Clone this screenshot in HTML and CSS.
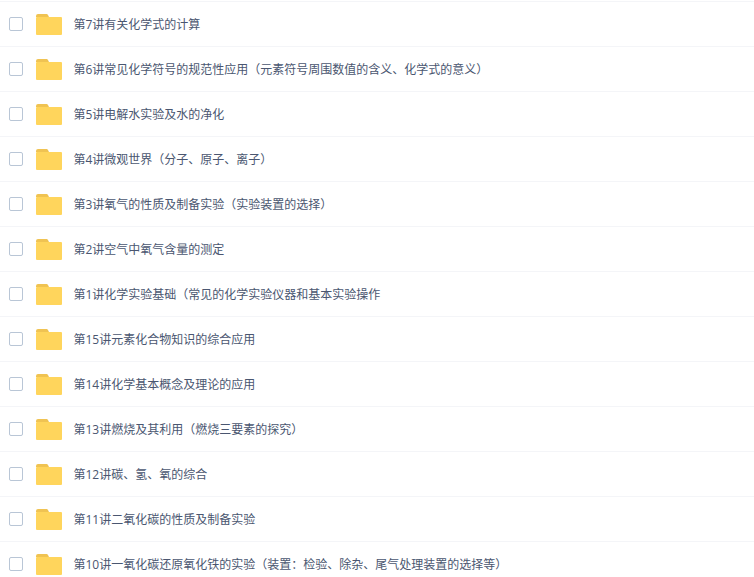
FILE: index.html
```html
<!DOCTYPE html>
<html lang="zh">
<head>
<meta charset="utf-8">
<title>文件列表</title>
<link rel="stylesheet" href="styles.css">
</head>
<body>
<ul class="list">
<li class="row"><span class="check"></span><svg class="folder" viewBox="0 0 26 21"><path class="tab" d="M0 2a2 2 0 0 1 2-2h8a2 2 0 0 1 2 1l1 2H0z"/><path class="body" d="M0 4a1 1 0 0 1 1-1h24a1 1 0 0 1 1 1v16a1 1 0 0 1-1 1H1a1 1 0 0 1-1-1z"/></svg><span class="name">第7讲有关化学式的计算</span></li>
<li class="row"><span class="check"></span><svg class="folder" viewBox="0 0 26 21"><path class="tab" d="M0 2a2 2 0 0 1 2-2h8a2 2 0 0 1 2 1l1 2H0z"/><path class="body" d="M0 4a1 1 0 0 1 1-1h24a1 1 0 0 1 1 1v16a1 1 0 0 1-1 1H1a1 1 0 0 1-1-1z"/></svg><span class="name">第6讲常见化学符号的规范性应用（元素符号周围数值的含义、化学式的意义）</span></li>
<li class="row"><span class="check"></span><svg class="folder" viewBox="0 0 26 21"><path class="tab" d="M0 2a2 2 0 0 1 2-2h8a2 2 0 0 1 2 1l1 2H0z"/><path class="body" d="M0 4a1 1 0 0 1 1-1h24a1 1 0 0 1 1 1v16a1 1 0 0 1-1 1H1a1 1 0 0 1-1-1z"/></svg><span class="name">第5讲电解水实验及水的净化</span></li>
<li class="row"><span class="check"></span><svg class="folder" viewBox="0 0 26 21"><path class="tab" d="M0 2a2 2 0 0 1 2-2h8a2 2 0 0 1 2 1l1 2H0z"/><path class="body" d="M0 4a1 1 0 0 1 1-1h24a1 1 0 0 1 1 1v16a1 1 0 0 1-1 1H1a1 1 0 0 1-1-1z"/></svg><span class="name">第4讲微观世界（分子、原子、离子）</span></li>
<li class="row"><span class="check"></span><svg class="folder" viewBox="0 0 26 21"><path class="tab" d="M0 2a2 2 0 0 1 2-2h8a2 2 0 0 1 2 1l1 2H0z"/><path class="body" d="M0 4a1 1 0 0 1 1-1h24a1 1 0 0 1 1 1v16a1 1 0 0 1-1 1H1a1 1 0 0 1-1-1z"/></svg><span class="name">第3讲氧气的性质及制备实验（实验装置的选择）</span></li>
<li class="row"><span class="check"></span><svg class="folder" viewBox="0 0 26 21"><path class="tab" d="M0 2a2 2 0 0 1 2-2h8a2 2 0 0 1 2 1l1 2H0z"/><path class="body" d="M0 4a1 1 0 0 1 1-1h24a1 1 0 0 1 1 1v16a1 1 0 0 1-1 1H1a1 1 0 0 1-1-1z"/></svg><span class="name">第2讲空气中氧气含量的测定</span></li>
<li class="row"><span class="check"></span><svg class="folder" viewBox="0 0 26 21"><path class="tab" d="M0 2a2 2 0 0 1 2-2h8a2 2 0 0 1 2 1l1 2H0z"/><path class="body" d="M0 4a1 1 0 0 1 1-1h24a1 1 0 0 1 1 1v16a1 1 0 0 1-1 1H1a1 1 0 0 1-1-1z"/></svg><span class="name">第1讲化学实验基础（常见的化学实验仪器和基本实验操作</span></li>
<li class="row"><span class="check"></span><svg class="folder" viewBox="0 0 26 21"><path class="tab" d="M0 2a2 2 0 0 1 2-2h8a2 2 0 0 1 2 1l1 2H0z"/><path class="body" d="M0 4a1 1 0 0 1 1-1h24a1 1 0 0 1 1 1v16a1 1 0 0 1-1 1H1a1 1 0 0 1-1-1z"/></svg><span class="name">第15讲元素化合物知识的综合应用</span></li>
<li class="row"><span class="check"></span><svg class="folder" viewBox="0 0 26 21"><path class="tab" d="M0 2a2 2 0 0 1 2-2h8a2 2 0 0 1 2 1l1 2H0z"/><path class="body" d="M0 4a1 1 0 0 1 1-1h24a1 1 0 0 1 1 1v16a1 1 0 0 1-1 1H1a1 1 0 0 1-1-1z"/></svg><span class="name">第14讲化学基本概念及理论的应用</span></li>
<li class="row"><span class="check"></span><svg class="folder" viewBox="0 0 26 21"><path class="tab" d="M0 2a2 2 0 0 1 2-2h8a2 2 0 0 1 2 1l1 2H0z"/><path class="body" d="M0 4a1 1 0 0 1 1-1h24a1 1 0 0 1 1 1v16a1 1 0 0 1-1 1H1a1 1 0 0 1-1-1z"/></svg><span class="name">第13讲燃烧及其利用（燃烧三要素的探究）</span></li>
<li class="row"><span class="check"></span><svg class="folder" viewBox="0 0 26 21"><path class="tab" d="M0 2a2 2 0 0 1 2-2h8a2 2 0 0 1 2 1l1 2H0z"/><path class="body" d="M0 4a1 1 0 0 1 1-1h24a1 1 0 0 1 1 1v16a1 1 0 0 1-1 1H1a1 1 0 0 1-1-1z"/></svg><span class="name">第12讲碳、氢、氧的综合</span></li>
<li class="row"><span class="check"></span><svg class="folder" viewBox="0 0 26 21"><path class="tab" d="M0 2a2 2 0 0 1 2-2h8a2 2 0 0 1 2 1l1 2H0z"/><path class="body" d="M0 4a1 1 0 0 1 1-1h24a1 1 0 0 1 1 1v16a1 1 0 0 1-1 1H1a1 1 0 0 1-1-1z"/></svg><span class="name">第11讲二氧化碳的性质及制备实验</span></li>
<li class="row"><span class="check"></span><svg class="folder" viewBox="0 0 26 21"><path class="tab" d="M0 2a2 2 0 0 1 2-2h8a2 2 0 0 1 2 1l1 2H0z"/><path class="body" d="M0 4a1 1 0 0 1 1-1h24a1 1 0 0 1 1 1v16a1 1 0 0 1-1 1H1a1 1 0 0 1-1-1z"/></svg><span class="name">第10讲一氧化碳还原氧化铁的实验（装置：检验、除杂、尾气处理装置的选择等）</span></li>
</ul>
</body>
</html>
```
FILE: styles.css
```css
html, body {
  margin: 0;
  padding: 0;
  background: #fff;
  overflow: hidden;
}
.list {
  list-style: none;
  margin: 1px 0 0;
  padding: 0;
  border-top: 1px solid #f4f5f8;
  font-family: "Open Sans", "Noto Sans CJK SC", sans-serif;
  font-size: 12px;
  color: #4a5670;
}
.row {
  display: flex;
  align-items: center;
  height: 44px;
  border-bottom: 1px solid #f4f5f8;
  padding-left: 9px;
}
.check {
  box-sizing: border-box;
  width: 14px;
  height: 14px;
  border: 1px solid #b9c6d6;
  border-radius: 2px;
  background: #fff;
  flex: none;
}
.folder {
  width: 26px;
  height: 21px;
  margin-left: 13px;
  flex: none;
}
.tab { fill: #f0c352; }
.body { fill: #ffd55c; }
.name {
  margin-left: 11.5px;
  padding-bottom: 1px;
  white-space: nowrap;
}
```
